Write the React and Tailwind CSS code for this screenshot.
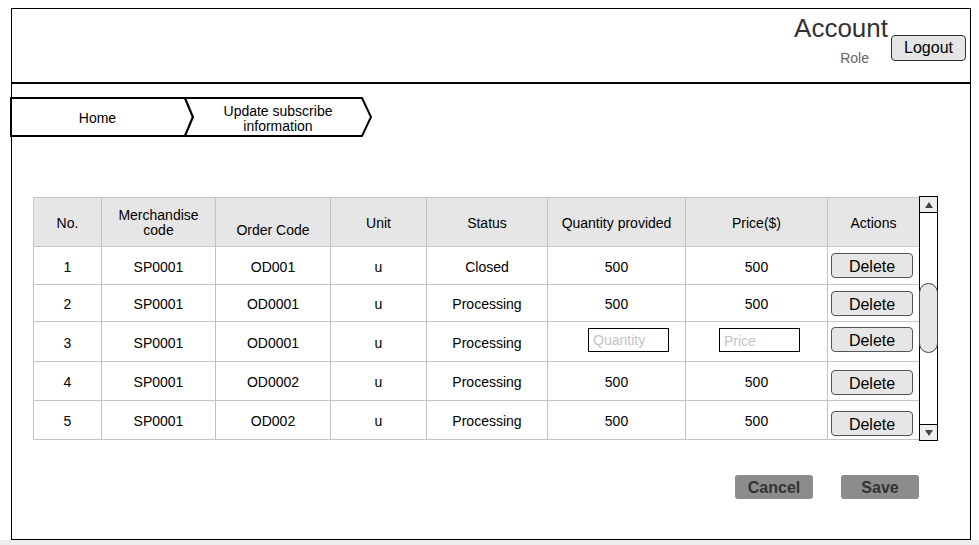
import React from 'react';

const rows = [
  { no: 1, code: 'SP0001', order: 'OD001', unit: 'u', status: 'Closed', qty: '500', price: '500', h: 'h-[38px]', btn: 'pt-[6px]' },
  { no: 2, code: 'SP0001', order: 'OD0001', unit: 'u', status: 'Processing', qty: '500', price: '500', h: 'h-[37px]', btn: 'pt-[6px]' },
  { no: 3, code: 'SP0001', order: 'OD0001', unit: 'u', status: 'Processing', editing: true, h: 'h-[40px]', btn: 'pt-[5px]' },
  { no: 4, code: 'SP0001', order: 'OD0002', unit: 'u', status: 'Processing', qty: '500', price: '500', h: 'h-[39px]', btn: 'pt-[8px]' },
  { no: 5, code: 'SP0001', order: 'OD002', unit: 'u', status: 'Processing', qty: '500', price: '500', h: 'h-[39px]', btn: 'pt-[10px]' },
];

const cell = 'border border-[#c4c4c4] text-center align-middle p-0 pt-[2px]';

const Breadcrumb = () => (
  <div className="relative w-[364px] h-[41px] ml-[-2px] mt-[13px]">
    <svg width="364" height="41" className="absolute inset-0">
      <path d="M1 1 H175 L183 20 L175 39 H1 Z" fill="white" stroke="black" strokeWidth="2" strokeLinejoin="miter" />
      <path d="M175 1 H352 L361 20 L352 39 H175 L183 20 Z" fill="white" stroke="black" strokeWidth="2" strokeLinejoin="miter" />
    </svg>
    <div className="absolute inset-0 flex text-[14px] leading-[15px] text-black">
      <div className="w-[175px] flex items-center justify-center pt-[2px]">Home</div>
      <div className="w-[186px] flex items-center justify-center text-center pt-[2px]">
        Update subscribe
        <br />
        information
      </div>
    </div>
  </div>
);

const Scrollbar = () => (
  <div className="w-[19px] h-[245px] ml-[-1px] mt-[-1px] border border-black flex flex-col bg-white">
    <div className="h-[16px] border-b border-black bg-[#eeeeee] flex items-center justify-center">
      <svg width="10" height="8"><path d="M5 1 L9 7 H1 Z" fill="#444" /></svg>
    </div>
    <div className="flex-1 relative">
      <div className="absolute left-[-1px] right-[-1px] top-[70px] h-[70px] rounded-full bg-[#e6e6e6] border border-[#444]" />
    </div>
    <div className="h-[16px] border-t border-black bg-[#eeeeee] flex items-center justify-center">
      <svg width="10" height="8"><path d="M1 1 H9 L5 7 Z" fill="#444" /></svg>
    </div>
  </div>
);

const DeleteButton = () => (
  <button className="w-[82px] h-[25px] bg-[#e6e6e6] border border-[#555] rounded-[4px] text-[16px] leading-[16px] text-black pt-[2px]">
    Delete
  </button>
);

const inputCls =
  'w-[81px] h-[24px] border border-black px-[4px] text-[14px] placeholder:text-[#c4c4c4] outline-none';

const App = () => {
  return (
    <div className="w-[979px] h-[545px] bg-white font-['Liberation_Sans',Arial,sans-serif] pt-[8px] overflow-hidden">
      <div className="ml-[11px] w-[960px] h-[532px] border border-black flex flex-col">
        {/* Header */}
        <div className="h-[75px] border-b-2 border-black flex justify-end items-start pr-[4px]">
          <div className="flex flex-col items-end pt-[4px]">
            <div className="text-[26px] leading-[30px] text-[#333]">Account</div>
            <div className="text-[14px] leading-[16px] text-[#666] mt-[7px] mr-[19px]">Role</div>
          </div>
          <button className="ml-[3px] mt-[26px] w-[75px] h-[26px] bg-[#e6e6e6] border border-[#333] rounded-[4px] text-[16px] leading-[16px] text-black">
            Logout
          </button>
        </div>

        <Breadcrumb />

        {/* Table */}
        <div className="flex ml-[21px] mt-[59px] items-start">
          <table className="border-collapse table-fixed w-[886px] text-[14px] leading-[14px] text-black">
            <colgroup>
              <col className="w-[68px]" />
              <col className="w-[114px]" />
              <col className="w-[115px]" />
              <col className="w-[96px]" />
              <col className="w-[121px]" />
              <col className="w-[138px]" />
              <col className="w-[142px]" />
              <col className="w-[92px]" />
            </colgroup>
            <thead>
              <tr className="h-[49px] bg-[#e6e6e6]">
                <th className={`${cell} font-normal`}>No.</th>
                <th className={`${cell} font-normal leading-[15px]`}>
                  Merchandise
                  <br />
                  code
                </th>
                <th className={`${cell} font-normal pt-[16px]`}>Order Code</th>
                <th className={`${cell} font-normal`}>Unit</th>
                <th className={`${cell} font-normal`}>Status</th>
                <th className={`${cell} font-normal`}>Quantity provided</th>
                <th className={`${cell} font-normal`}>Price($)</th>
                <th className={`${cell} font-normal`}>Actions</th>
              </tr>
            </thead>
            <tbody>
              {rows.map((r) => (
                <tr key={r.no} className={r.h}>
                  <td className={cell}>{r.no}</td>
                  <td className={cell}>{r.code}</td>
                  <td className={cell}>{r.order}</td>
                  <td className={cell}>{r.unit}</td>
                  <td className={cell}>{r.status}</td>
                  {r.editing ? (
                    <>
                      <td className="border border-[#c4c4c4] p-0 align-top pt-[6px]">
                        <div className="flex pl-[40px]">
                          <input placeholder="Quantity" className={inputCls} />
                        </div>
                      </td>
                      <td className="border border-[#c4c4c4] p-0 align-top pt-[6px]">
                        <div className="flex pl-[33px]">
                          <input placeholder="Price" className={`${inputCls} pt-[2px]`} />
                        </div>
                      </td>
                    </>
                  ) : (
                    <>
                      <td className={cell}>{r.qty}</td>
                      <td className={cell}>{r.price}</td>
                    </>
                  )}
                  <td className={`border border-[#c4c4c4] p-0 align-top text-left pl-[3px] ${r.btn}`}>
                    <DeleteButton />
                  </td>
                </tr>
              ))}
            </tbody>
          </table>
          <Scrollbar />
        </div>

        {/* Footer buttons */}
        <div className="flex justify-end gap-[28px] mt-[34px] pr-[51px]">
          <button className="w-[78px] h-[24px] bg-[#8c8c8c] rounded-[3px] text-[16px] font-bold text-[#333] leading-[16px] pt-[2px]">
            Cancel
          </button>
          <button className="w-[78px] h-[24px] bg-[#8c8c8c] rounded-[3px] text-[16px] font-bold text-[#333] leading-[16px] pt-[2px]">
            Save
          </button>
        </div>
      </div>
      <div className="h-[5px] bg-[#eeeeee]" />
    </div>
  );
};

export default App;
